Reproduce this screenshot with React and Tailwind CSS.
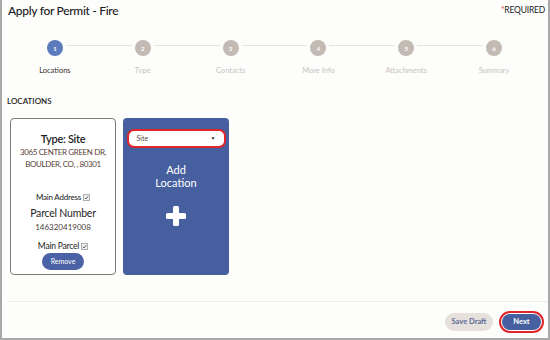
import React from "react";

const steps = ["Locations", "Type", "Contacts", "More Info", "Attachments", "Summary"];

function Check() {
  return (
    <span className="inline-flex items-center justify-center w-[7px] h-[7px] border border-[#b0b0b0] bg-[#f0f0f0] ml-[2px] align-middle">
      <svg width="5" height="5" viewBox="0 0 10 10">
        <path d="M1.5 5.5 L4 8 L8.5 2" stroke="#444" strokeWidth="1.6" fill="none" />
      </svg>
    </span>
  );
}

export default function App() {
  return (
    <div
      className="w-[550px] h-[340px] bg-[#fdfdfc] border-l-2 border-r-2 border-b-2 border-[#a9a9a9] flex flex-col overflow-hidden relative"
      style={{ fontFamily: "Lato, 'Open Sans', sans-serif" }}
    >
      <div className="flex justify-between items-start pl-[6px] pr-[3px] pt-[4px] h-[26px]">
        <div className="text-[12px] font-medium text-[#1c1c1c] tracking-[-0.3px] leading-[14px]">Apply for Permit - Fire</div>
        <div className="text-[8.5px] text-[#222] leading-[12px] tracking-[-0.2px]">
          <span className="text-[#e04040]">*</span>REQUIRED
        </div>
      </div>

      <div className="relative flex pl-[9px] pr-[10px] mt-[14px]">
        {steps.map((s, i) => (
          <div key={s} className="relative flex-1 flex flex-col items-center">
            {i < steps.length - 1 && (
              <div className="absolute top-[5px] left-[calc(50%+11px)] right-[calc(-50%+11px)] h-px bg-[#e6e3e0]" />
            )}
            <div
              className={`w-[16px] h-[16px] rounded-full flex items-center justify-center text-[6px] text-white font-bold ${
                i === 0 ? "bg-[#5b7bbd]" : "bg-[#c2bab3]"
              }`}
            >
              {i + 1}
            </div>
            <div
              className={`mt-[10px] text-[7.5px] leading-[10px] ${
                i === 0 ? "text-[#3a3030]" : "text-[#c9c3c0]"
              }`}
            >
              {s}
            </div>
          </div>
        ))}
      </div>

      <div className="pl-[5px] mt-[20px] text-[8px] font-semibold text-[#222] leading-[10px]">LOCATIONS</div>

      <div className="flex gap-[7px] pl-[8px] mt-[12px]">
        <div className="w-[106px] h-[157px] border-[1.5px] border-[#7d7a78] rounded-[4px] bg-white flex flex-col items-center">
          <div className="mt-[13px] text-[11px] font-semibold text-[#1f1f1f] leading-[14px] tracking-[-0.3px]">Type: Site</div>
          <div className="mt-0 text-[8px] text-[#5a3f38] leading-[12px] text-center tracking-[-0.4px]">
            3065 CENTER GREEN DR,
            <br />
            BOULDER, CO, , 80301
          </div>
          <div className="mt-[22px] text-[8px] text-[#222] leading-[10px] flex items-center tracking-[-0.2px]">
            Main Address <Check />
          </div>
          <div className="mt-[5px] text-[10.5px] text-[#1f1f1f] leading-[12px] tracking-[-0.2px]">Parcel Number</div>
          <div className="mt-[3px] text-[8px] text-[#4a3a3a] leading-[10px]">146320419008</div>
          <div className="mt-[9px] text-[8.5px] text-[#222] leading-[10px] flex items-center tracking-[-0.2px]">
            Main Parcel <Check />
          </div>
          <div className="mt-[2px] w-[42px] h-[17px] rounded-full bg-[#4b63a6] text-white text-[7px] flex items-center justify-center">
            Remove
          </div>
        </div>

        <div className="w-[106px] h-[157px] rounded-[4px] bg-[#465f9f] flex flex-col items-center">
          <div className="mt-[11px] w-[99px] h-[19px] rounded-[7px] border-2 border-[#e0252a] bg-white flex items-center justify-between px-[8px]">
            <span className="text-[7px] text-[#5a4a4a]">Site</span>
            <span className="text-[5px] text-[#333]">▼</span>
          </div>
          <div className="mt-[15px] text-[11px] text-white leading-[13px] text-center">
            Add
            <br />
            Location
          </div>
          <svg className="mt-[17px]" width="20" height="20" viewBox="0 0 20 20">
            <rect x="7" y="0" width="6" height="20" rx="1.5" fill="white" />
            <rect x="0" y="7" width="20" height="6" rx="1.5" fill="white" />
          </svg>
        </div>
      </div>

      <div className="mt-[26px] ml-[5px] h-px bg-[#efedeb]" />

      <div className="flex justify-end items-center gap-[6px] pr-[4px] mt-[9px]">
        <div className="w-[48px] h-[18px] rounded-full bg-[#e6e1dc] text-[#5a6a96] text-[7.5px] font-bold flex items-center justify-center">
          Save Draft
        </div>
        <div className="w-[45px] h-[22px] rounded-[11px] border-2 border-[#e0252a] bg-white p-[1px] flex">
          <div className="flex-1 rounded-full bg-[#465f9f] text-white text-[7.5px] font-bold flex items-center justify-center">
            Next
          </div>
        </div>
      </div>
    </div>
  );
}
